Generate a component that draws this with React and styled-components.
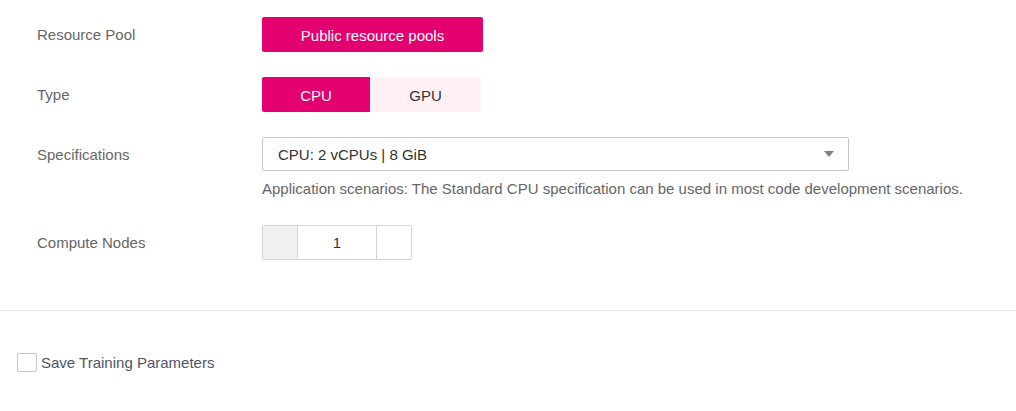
import React from 'react';
import styled, { createGlobalStyle } from 'styled-components';

const GlobalStyle = createGlobalStyle`
    body{
        margin: 0;
        background: #fff;
        font-family: "Liberation Sans", Arial, sans-serif;
        font-size: 15px;
    }
`;

const PINK = '#e3006f';

const FormStyled = styled.div`
    padding: 17px 0 0 37px;
`;

const Row = styled.div`
    display: grid;
    grid-template-columns: 225px 1fr;
    align-items: start;
    margin-bottom: ${p => p.gap ?? 25}px;
`;

const Label = styled.div`
    color: #666;
    height: ${p => p.h || 35}px;
    line-height: ${p => (p.h || 35) + 1}px;
`;

const PoolButton = styled.button`
    display: block;
    width: 221px;
    height: 35px;
    border: none;
    border-radius: 2px;
    background: ${PINK};
    color: #fff;
    font-family: inherit;
    font-size: 15px;
    padding: 1px 0 0 0;
`;

const Toggle = styled.div`
    display: flex;
`;

const ToggleItem = styled.button`
    width: ${p => p.w}px;
    height: 35px;
    border: none;
    padding: 1px 0 0 0;
    font-family: inherit;
    font-size: 15px;
    background: ${p => (p.active ? PINK : '#fff0f6')};
    color: ${p => (p.active ? '#fff' : '#333')};
    border-radius: ${p => (p.first ? '2px 0 0 2px' : '0 2px 2px 0')};
`;

const Select = styled.div`
    box-sizing: border-box;
    width: 587px;
    height: 34px;
    border: 1px solid #c9c9c9;
    border-radius: 2px;
    display: flex;
    align-items: center;
    justify-content: space-between;
    padding: 0 14px 0 15px;
    color: #333;
`;

const Arrow = styled.span`
    width: 0;
    height: 0;
    border-left: 5px solid transparent;
    border-right: 5px solid transparent;
    border-top: 6px solid #808080;
`;

const Hint = styled.div`
    color: #666;
    line-height: 20px;
    margin-top: 8px;
`;

const Stepper = styled.div`
    display: flex;
    box-sizing: border-box;
    width: 150px;
    height: 35px;
    border: 1px solid #d4d4d4;
    border-radius: 2px;
`;

const StepButton = styled.div`
    width: 34px;
    background: ${p => (p.disabled ? '#f0f0f0' : '#fff')};
    border-left: ${p => (p.right ? '1px solid #d4d4d4' : 'none')};
    border-right: ${p => (p.right ? 'none' : '1px solid #d4d4d4')};
`;

const StepValue = styled.div`
    flex: 1;
    display: flex;
    align-items: center;
    justify-content: center;
    color: #333;
`;

const Divider = styled.hr`
    border: none;
    border-top: 1px solid #e3e3e3;
    margin: 50px 0 0 0;
`;

const CheckRow = styled.label`
    display: flex;
    align-items: center;
    gap: 4px;
    margin: 42px 0 0 17px;
    color: #4f5468;
`;

const CheckBox = styled.span`
    box-sizing: border-box;
    width: 20px;
    height: 19px;
    border: 1px solid #c6c6c6;
    border-radius: 2px;
    background: #fff;
`;

export default function App() {
    return (
        <>
            <GlobalStyle />
            <FormStyled>
                <Row>
                    <Label>Resource Pool</Label>
                    <div><PoolButton>Public resource pools</PoolButton></div>
                </Row>
                <Row>
                    <Label>Type</Label>
                    <Toggle>
                        <ToggleItem w={108} active first>CPU</ToggleItem>
                        <ToggleItem w={111}>GPU</ToggleItem>
                    </Toggle>
                </Row>
                <Row gap={26}>
                    <Label h={34}>Specifications</Label>
                    <div>
                        <Select>
                            <span>CPU: 2 vCPUs | 8 GiB</span>
                            <Arrow />
                        </Select>
                        <Hint>Application scenarios: The Standard CPU specification can be used in most code development scenarios.</Hint>
                    </div>
                </Row>
                <Row gap={0}>
                    <Label>Compute Nodes</Label>
                    <Stepper>
                        <StepButton disabled />
                        <StepValue>1</StepValue>
                        <StepButton right />
                    </Stepper>
                </Row>
            </FormStyled>
            <Divider />
            <CheckRow>
                <CheckBox />
                <span>Save Training Parameters</span>
            </CheckRow>
        </>
    );
}
